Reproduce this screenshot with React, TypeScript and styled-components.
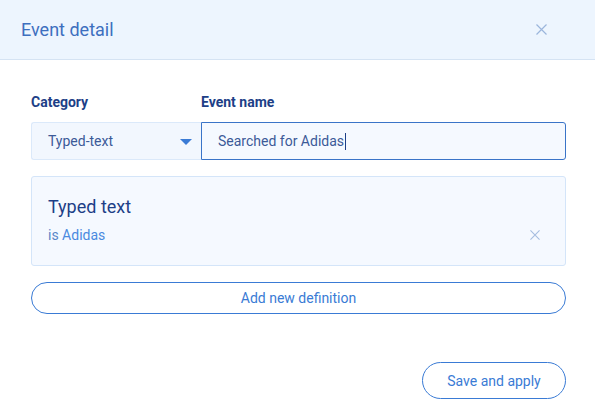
import styled, { createGlobalStyle } from 'styled-components';

const GlobalStyle = createGlobalStyle`
  html, body {
    margin: 0;
    padding: 0;
    background: #ffffff;
    font-family: Roboto, "Liberation Sans", sans-serif;
  }
  * {
    box-sizing: border-box;
  }
`;

const CloseIcon = ({ size = 11, color = '#9bb5dc' }: { size?: number; color?: string }) => (
  <svg width={size} height={size} viewBox="0 0 11 11">
    <path d="M0.5 0.5 L10.5 10.5 M10.5 0.5 L0.5 10.5" stroke={color} strokeWidth="1.2" fill="none" />
  </svg>
);

export default function App() {
  return (
    <>
      <GlobalStyle />
      <Modal>
        <Header>
          <Title>Event detail</Title>
          <IconButton>
            <CloseIcon />
          </IconButton>
        </Header>

        <Body>
          <Fields>
            <Field $width="170px">
              <Label>Category</Label>
              <Select>
                <span>Typed-text</span>
                <Caret />
              </Select>
            </Field>
            <Field $width="365px">
              <Label>Event name</Label>
              <Input>
                Searched for Adidas
                <Cursor />
              </Input>
            </Field>
          </Fields>

          <DefinitionCard>
            <CardTitle>Typed text</CardTitle>
            <CardRow>
              <Condition>
                is <Value>Adidas</Value>
              </Condition>
              <IconButton>
                <CloseIcon size={10} color="#a5bde0" />
              </IconButton>
            </CardRow>
          </DefinitionCard>

          <WideButton>Add new definition</WideButton>
        </Body>

        <Footer>
          <PillButton>Save and apply</PillButton>
        </Footer>
      </Modal>
    </>
  );
}

const Modal = styled.div`
  width: 595px;
  height: 407px;
  background: #ffffff;
  display: flex;
  flex-direction: column;
`;

const Header = styled.div`
  height: 60px;
  display: flex;
  align-items: center;
  justify-content: space-between;
  padding: 0 48px 1px 21px;
  background: #edf5fe;
  border-bottom: 1px solid #d5e3f3;
`;

const Title = styled.h1`
  margin: 0;
  font-size: 18px;
  font-weight: 400;
  color: #3d6fbf;
`;

const IconButton = styled.button`
  display: flex;
  align-items: center;
  justify-content: center;
  padding: 0;
  border: none;
  background: none;
  cursor: pointer;
`;

const Body = styled.div`
  display: flex;
  flex-direction: column;
  padding: 33px 29px 0 31px;
`;

const Fields = styled.div`
  display: flex;
`;

const Field = styled.div<{ $width: string }>`
  width: ${(p) => p.$width};
  display: flex;
  flex-direction: column;
`;

const Label = styled.label`
  font-size: 14px;
  font-weight: 700;
  color: #1d3f87;
  line-height: 18px;
  margin-bottom: 11px;
`;

const Select = styled.div`
  height: 38px;
  display: flex;
  align-items: center;
  justify-content: space-between;
  padding: 0 9px 0 16px;
  background: #f2f7fe;
  border: 1px solid #dbe9fa;
  border-right: none;
  border-radius: 3px 0 0 3px;
  font-size: 14px;
  color: #3c5a98;
`;

const Caret = styled.span`
  width: 0;
  height: 0;
  margin-top: 2px;
  border-left: 6px solid transparent;
  border-right: 6px solid transparent;
  border-top: 6px solid #3a7bd5;
`;

const Input = styled.div`
  height: 38px;
  display: flex;
  align-items: center;
  padding: 0 16px;
  background: #f5f9ff;
  border: 1px solid #3a74c8;
  border-radius: 0 3px 3px 0;
  font-size: 14px;
  color: #3c5a98;
`;

const Cursor = styled.span`
  width: 1px;
  height: 17px;
  margin-left: 1px;
  background: #1d3f87;
`;

const DefinitionCard = styled.div`
  margin-top: 16px;
  height: 90px;
  padding: 19px 25px 0 16px;
  background: #f5f9ff;
  border: 1px solid #d4e5f9;
  border-radius: 3px;
`;

const CardTitle = styled.div`
  font-size: 18px;
  color: #1d3f87;
  line-height: 22px;
`;

const CardRow = styled.div`
  display: flex;
  align-items: center;
  justify-content: space-between;
  margin-top: 7px;
`;

const Condition = styled.div`
  font-size: 14px;
  line-height: 20px;
  color: #5a87c9;
`;

const Value = styled.span`
  color: #4a8ae0;
`;

const WideButton = styled.button`
  margin-top: 16px;
  height: 32px;
  border: 1px solid #3a7bd5;
  border-radius: 16px;
  background: #ffffff;
  font-family: Roboto, "Liberation Sans", sans-serif;
  font-size: 14px;
  color: #3a7bd5;
  cursor: pointer;
`;

const Footer = styled.div`
  display: flex;
  justify-content: flex-end;
  padding: 48px 29px 0 0;
`;

const PillButton = styled.button`
  width: 144px;
  height: 37px;
  border: 1px solid #3a7bd5;
  border-radius: 19px;
  background: #ffffff;
  font-family: Roboto, "Liberation Sans", sans-serif;
  font-size: 14px;
  color: #3a7bd5;
  cursor: pointer;
`;
